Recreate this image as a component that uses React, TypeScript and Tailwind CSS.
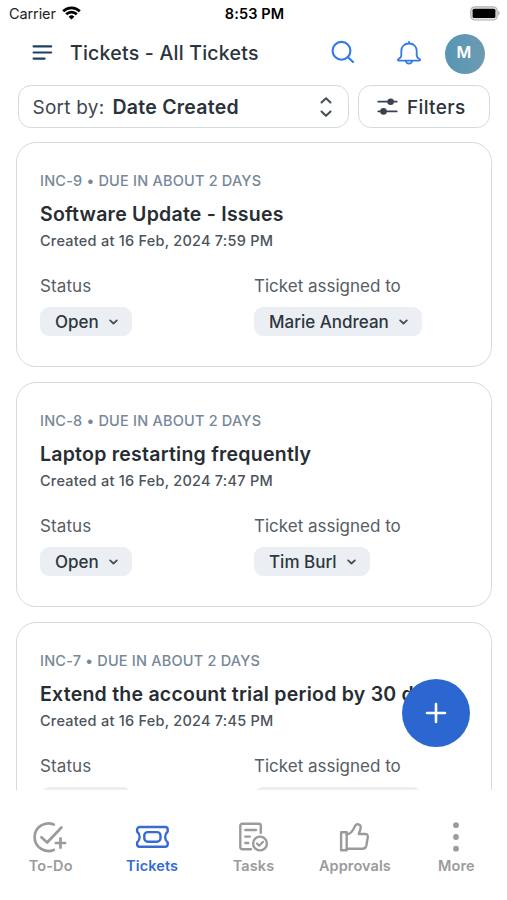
import type { ReactNode } from "react";

type Ticket = {
  id: string;
  title: string;
  created: string;
  status: string;
  assignee: string;
};

const tickets: Ticket[] = [
  {
    id: "INC-9",
    title: "Software Update - Issues",
    created: "16 Feb, 2024 7:59 PM",
    status: "Open",
    assignee: "Marie Andrean",
  },
  {
    id: "INC-8",
    title: "Laptop restarting frequently",
    created: "16 Feb, 2024 7:47 PM",
    status: "Open",
    assignee: "Tim Burl",
  },
  {
    id: "INC-7",
    title: "Extend the account trial period by 30 days",
    created: "16 Feb, 2024 7:45 PM",
    status: "Open",
    assignee: "Marie Andrean",
  },
];

function StatusBar() {
  return (
    <div className="grid h-[27px] shrink-0 grid-cols-3 items-center pt-px pr-[7px] pl-[9px] text-[14.5px] leading-none text-black">
      <div className="flex items-center gap-[6px]">
        <span className="tracking-[-0.1px] text-[#222]">Carrier</span>
        <svg className="-mt-[2px]" width="19" height="14" viewBox="0 0 19 14" fill="none" stroke="#000" strokeWidth="2.7">
          <path d="M1.2 5.2a11.8 11.8 0 0 1 16.6 0" />
          <path d="M4.2 8.3a7.5 7.5 0 0 1 10.6 0" />
          <path d="M9.5 13.6 6.6 10.7a4.1 4.1 0 0 1 5.8 0Z" fill="#000" stroke="none" />
        </svg>
      </div>
      <span className="text-center font-semibold tracking-[0.1px]">8:53 PM</span>
      <svg className="-mt-px justify-self-end" width="30" height="15" viewBox="0 0 30 15">
        <rect x="0.8" y="0.8" width="26.4" height="13.2" rx="4" fill="#e4e4e4" stroke="#b0b0b0" strokeWidth="1.2" />
        <rect x="2.6" y="2.8" width="22.8" height="9.2" rx="1.5" fill="#000" />
        <path d="M28.3 5v4.6c1.8-.5 1.8-4.1 0-4.6Z" fill="#a9a9a9" />
      </svg>
    </div>
  );
}

function Header() {
  return (
    <header className="flex h-[53px] shrink-0 items-center pr-[22px] pl-[32px]">
      <svg
        className="-mt-[2px]"
        width="21"
        height="17"
        viewBox="0 0 21 17"
        stroke="#1f4060"
        strokeWidth="2.2"
        strokeLinecap="round"
      >
        <path d="M1.6 2.4h17.6M1.6 8.5h17.6M1.6 14.6h11" />
      </svg>
      <h1 className="-mt-[2px] ml-[17px] text-[19.5px] leading-5 font-medium tracking-[0.23px] whitespace-nowrap text-[#2b333b]">
        Tickets - All Tickets
      </h1>
      <svg
        className="-mt-[3px] ml-auto"
        width="24"
        height="24"
        viewBox="0 0 24 24"
        fill="none"
        stroke="#2f7be5"
        strokeWidth="2.1"
        strokeLinecap="round"
      >
        <circle cx="10.5" cy="10.8" r="8.9" />
        <path d="m16.8 17 5.2 5" />
      </svg>
      <svg
        className="-mt-[2px] ml-[41px]"
        width="26"
        height="24"
        viewBox="0 0 26 24"
        fill="none"
        stroke="#2f7be5"
        strokeWidth="1.8"
        strokeLinecap="round"
        strokeLinejoin="round"
      >
        <path d="M13 1v1.5M13 2.5c-4.7 0-7.7 3.1-7.7 7.5v4.5c0 1.5-.7 2.3-2.4 3.2-1.5.9-1.2 2 .2 2h19.8c1.400 0 1.700-1.100.2-2-1.700-.9-2.400-1.700-2.400-3.200V10c0-4.400-3-7.500-7.700-7.500Z" />
        <path d="M9.8 19.900c.4 1.900 1.700 2.700 3.200 2.700s2.800-.8 3.200-2.700" />
      </svg>
      <div className="ml-[23px] flex size-10 items-center justify-center rounded-full bg-linear-to-r from-[#5696b4] to-[#6d9ab2] pr-[2px] pb-[3px] text-[16px] leading-none font-semibold text-white">
        M
      </div>
    </header>
  );
}

function SortBar() {
  return (
    <div className="flex shrink-0 gap-[9px] pt-[5px] pr-[17px] pl-[17.5px]">
      <button className="flex h-[43px] w-[331px] items-center rounded-[13px] border-[1.5px] border-[#d5dadb] pr-[15px] pl-[14px] text-[19px] leading-6 whitespace-nowrap">
        <span className="pt-[2px] tracking-[0.25px] text-[#3d464f]">Sort by:</span>
        <span className="ml-[8px] text-[19.5px] font-semibold tracking-[0.25px] text-[#2b333b]">
          Date Created
        </span>
        <svg
          className="ml-auto"
          width="14"
          height="22"
          viewBox="0 0 14 22"
          fill="none"
          stroke="#444c55"
          strokeWidth="2"
          strokeLinecap="round"
          strokeLinejoin="round"
        >
          <path d="m2.5 6.5 4.5-4.3 4.5 4.3M2.500 15.500l4.500 4.300 4.500-4.300" />
        </svg>
      </button>
      <button className="flex h-[43px] w-[132px] items-center rounded-[13px] border-[1.5px] border-[#d5dadb] pl-[18px] text-[19px] leading-6 font-medium text-[#2b333b]">
        <svg width="21" height="18" viewBox="0 0 21 18" stroke="#38424d" strokeWidth="1.8" strokeLinecap="round">
          <path d="M1.3 3.7h18.4M1.3 13.4h18.4" />
          <circle cx="13.6" cy="3.7" r="2.4" fill="#38424d" />
          <circle cx="6.5" cy="13.4" r="2.4" fill="#38424d" />
        </svg>
        <span className="ml-[9.5px] pt-[2px] tracking-[0.35px]">Filters</span>
      </button>
    </div>
  );
}

function Pill({ children }: { children: ReactNode }) {
  return (
    <button className="mt-[10px] flex h-[29px] items-center gap-[10px] rounded-[9px] bg-[#ebeef2] pr-[14px] pl-[15px] text-[17px] leading-5 font-medium whitespace-nowrap text-[#2e3740]">
      <span>{children}</span>
      <svg
        width="9"
        height="8"
        viewBox="0 0 9 8"
        fill="none"
        stroke="#4a525b"
        strokeWidth="1.9"
        strokeLinecap="round"
        strokeLinejoin="round"
      >
        <path d="m1.2 2.4 3.3 3.1 3.3-3.1" />
      </svg>
    </button>
  );
}

function TicketCard({ ticket }: { ticket: Ticket }) {
  return (
    <article className="h-[225px] shrink-0 overflow-hidden rounded-[20px] border-[1.5px] border-[#d5dadb] pt-[28.5px] pl-[23px]">
      <p className="text-[14.5px] leading-5 font-medium tracking-[0.2px] whitespace-nowrap text-[#768899]">
        {ticket.id} • DUE IN ABOUT 2 DAYS
      </p>
      <h2 className="mt-[11px] text-[19.5px] leading-6 font-semibold tracking-[0.24px] whitespace-nowrap text-[#272d33]">
        {ticket.title}
      </h2>
      <p className="mt-[5px] text-[14.5px] leading-5 font-medium tracking-[0.24px] whitespace-nowrap text-[#4b535b]">
        Created at {ticket.created}
      </p>
      <div className="mt-[24px] flex text-[17px] leading-[22px] text-[#555d65]">
        <div className="flex w-[214px] flex-col items-start">
          <span className="tracking-[0.1px]">Status</span>
          <Pill>{ticket.status}</Pill>
        </div>
        <div className="flex flex-col items-start">
          <span>Ticket assigned to</span>
          <Pill>{ticket.assignee}</Pill>
        </div>
      </div>
    </article>
  );
}

function TabItem({ label, active, children }: { label: string; active?: boolean; children: ReactNode }) {
  return (
    <button
      className={`flex flex-1 flex-col items-center text-[14.5px] leading-5 font-semibold ${
        active ? "text-[#356bd3]" : "text-[#9b9b9b]"
      }`}
    >
      <svg
        width="36"
        height="36"
        viewBox="0 0 36 36"
        fill="none"
        stroke="currentColor"
        strokeWidth="2.4"
        strokeLinecap="round"
        strokeLinejoin="round"
      >
        {children}
      </svg>
      <span className="tracking-[0.1px] whitespace-nowrap">{label}</span>
    </button>
  );
}

function TabBar() {
  return (
    <nav className="flex h-[110px] shrink-0 items-start bg-white pt-[30px]">
      <TabItem label="To-Do">
        <g strokeWidth="2.7">
          <path d="M20.8 4.5A13.8 13.8 0 1 0 20.8 29.9" />
          <path d="m8.4 17.3 5.8 5.2L28.4 7.5M27.5 18.3v9.4M22.8 23h9.4" />
        </g>
      </TabItem>
      <TabItem label="Tickets" active>
        <path d="M5.6 7h25.6a2.500 2.500 0 0 1 2.500 2.500v2c-3.400 3-3.400 8 0 11v1.700a2.500 2.500 0 0 1-2.500 2.500H5.600a2.500 2.500 0 0 1-2.500-2.500v-1.700c3.400-3 3.400-8 0-11v-2A2.500 2.500 0 0 1 5.600 7Z" />
        <rect x="10.3" y="12.1" width="16.2" height="9.6" rx="3.5" />
      </TabItem>
      <TabItem label="Tasks">
        <path d="M15 29.2H6.3a2 2 0 0 1-2-2V5.8a2 2 0 0 1 2-2h16.500a2 2 0 0 1 2 2v7" />
        <path d="M9.3 10H20M9.3 16.6h4.5M9.3 23h3" />
        <circle cx="24" cy="23.5" r="6.9" />
        <path d="m21 23.5 2.2 2.2 3.9-3.9" strokeWidth="2.2" />
      </TabItem>
      <TabItem label="Approvals">
        <path d="M4.1 12.3h5.6v17.9H4.1Z" />
        <path d="M9.700 14.500c4.400-.5 6.400-3.800 8.200-8.400 1.200-3.200 6.100-2 5.800 1.200-.2 2.300-1.200 4.300-1.900 6.700h6.400c2 0 2.900 1.300 2.600 3.100l-1.400 8.400c-.5 2.500-1.700 3.300-4 3.300H9.700" />
      </TabItem>
      <TabItem label="More">
        <g fill="currentColor" stroke="none">
          <circle cx="18" cy="5.2" r="2.9" />
          <circle cx="18" cy="17" r="2.9" />
          <circle cx="18" cy="28.7" r="2.9" />
        </g>
      </TabItem>
    </nav>
  );
}

export default function App() {
  return (
    <div className="relative flex h-[900px] w-[507px] flex-col overflow-hidden bg-white font-['Inter',sans-serif]">
      <StatusBar />
      <Header />
      <SortBar />
      <main className="mt-[13.5px] flex min-h-0 flex-1 flex-col gap-[15.2px] overflow-hidden pr-[15px] pl-[16px]">
        {tickets.map((ticket) => (
          <TicketCard key={ticket.id} ticket={ticket} />
        ))}
      </main>
      <TabBar />
      <button
        aria-label="Create ticket"
        className="absolute top-[679px] left-[402px] flex size-[68px] items-center justify-center rounded-full bg-[#2c66d1]"
      >
        <svg width="22" height="22" viewBox="0 0 22 22" stroke="#fff" strokeWidth="2.6" strokeLinecap="round">
          <path d="M11 2v18M2 11h18" />
        </svg>
      </button>
    </div>
  );
}
